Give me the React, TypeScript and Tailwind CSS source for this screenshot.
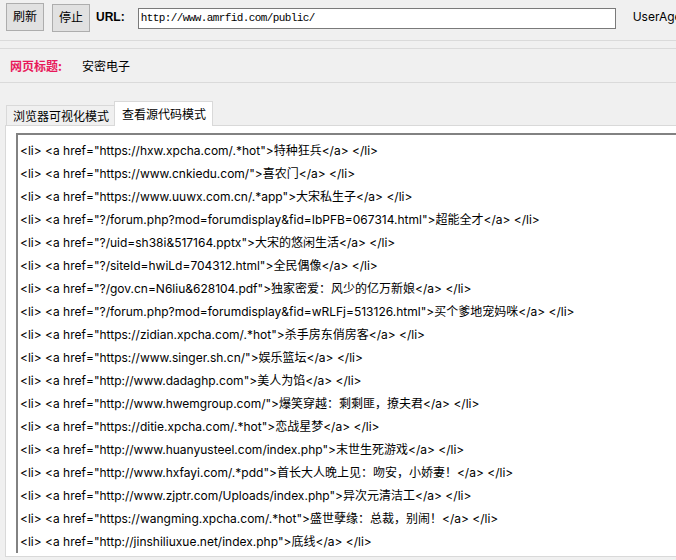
import React from "react";

const lines = [
  ["https://hxw.xpcha.com/.*hot", "特种狂兵"],
  ["https://www.cnkiedu.com/", "喜农门"],
  ["https://www.uuwx.com.cn/.*app", "大宋私生子"],
  ["?/forum.php?mod=forumdisplay&fid=IbPFB=067314.html", "超能全才"],
  ["?/uid=sh38i&517164.pptx", "大宋的悠闲生活"],
  ["?/siteId=hwiLd=704312.html", "全民偶像"],
  ["?/gov.cn=N6liu&628104.pdf", "独家密爱：风少的亿万新娘"],
  ["?/forum.php?mod=forumdisplay&fid=wRLFj=513126.html", "买个爹地宠妈咪"],
  ["https://zidian.xpcha.com/.*hot", "杀手房东俏房客"],
  ["https://www.singer.sh.cn/", "娱乐篮坛"],
  ["http://www.dadaghp.com", "美人为馅"],
  ["http://www.hwemgroup.com/", "爆笑穿越：剩剩匪，撩夫君"],
  ["https://ditie.xpcha.com/.*hot", "恋战星梦"],
  ["http://www.huanyusteel.com/index.php", "末世生死游戏"],
  ["http://www.hxfayi.com/.*pdd", "首长大人晚上见：吻安，小娇妻！"],
  ["http://www.zjptr.com/Uploads/index.php", "异次元清洁工"],
  ["https://wangming.xpcha.com/.*hot", "盛世孽缘：总裁，别闹！"],
  ["http://jinshiliuxue.net/index.php", "底线"],
];

const App = () => {
  return (
    <div className="w-[676px] h-[560px] overflow-hidden bg-[#f0f0f0] text-[12px] text-black font-['Inter','Noto_Sans_CJK_SC',sans-serif]">
      {/* Toolbar */}
      <div className="h-[40px] flex items-start overflow-hidden whitespace-nowrap">
        <button className="shrink-0 ml-[6px] mt-[3px] w-[38px] h-[28px] bg-[#e1e1e1] border border-[#adadad] text-[12px] leading-none">
          刷新
        </button>
        <button className="shrink-0 ml-[8px] mt-[4px] w-[38px] h-[28px] bg-[#e1e1e1] border border-[#adadad] text-[12px] leading-none">
          停止
        </button>
        <span className="shrink-0 ml-[6px] mt-[11px] font-['Liberation_Sans',sans-serif] font-bold text-[12px] leading-none">
          URL:
        </span>
        <div className="shrink-0 ml-[13px] mt-[8px] w-[478px] h-[21px] bg-white border border-[#7a7a7a] flex items-center pl-[2px] font-['Liberation_Mono',monospace] text-[11px] tracking-[-0.6px]">
          http://www.amrfid.com/public/
        </div>
        <span className="shrink-0 ml-[17px] mt-[11px] leading-none">UserAgent</span>
      </div>

      {/* Separator */}
      <div className="h-[9px] border-t border-b border-[#dadada]" />

      {/* Page title */}
      <div className="h-[34px] flex items-center border-b border-[#dadada] font-['Noto_Sans_CJK_SC',sans-serif]">
        <span className="ml-[10px] w-[72px] text-[#e8195b] font-bold">网页标题:</span>
        <span>安密电子</span>
      </div>

      {/* Tabs */}
      <div className="mt-[17px] ml-[6px] flex items-end h-[25px] whitespace-nowrap font-['Noto_Sans_CJK_SC',sans-serif]">
        <div className="w-[108px] h-[20px] pl-[6px] flex items-center border border-r-0 border-b-0 border-[#d9d9d9] bg-[#f0f0f0]">
          浏览器可视化模式
        </div>
        <div className="relative z-10 w-[99px] h-[25px] -mb-px pl-[7px] flex items-center border border-b-0 border-[#d9d9d9] bg-white">
          查看源代码模式
        </div>
      </div>

      {/* Panel */}
      <div className="ml-[5px] h-[432px] bg-white border border-r-0 border-[#d9d9d9] pt-[7px] pl-[10px]">
        <div className="h-[420px] border-t-2 border-l-2 border-[#828282] bg-white pt-[4px] pl-[2px] overflow-hidden">
          {lines.map(([href, title]) => (
            <div key={href} className="h-[23px] leading-[23px] whitespace-nowrap">
              {"<li> <a href=\""}
              {href}
              {"\">"}
              {title}
              {"</a> </li>"}
            </div>
          ))}
        </div>
      </div>
    </div>
  );
};

export default App;
